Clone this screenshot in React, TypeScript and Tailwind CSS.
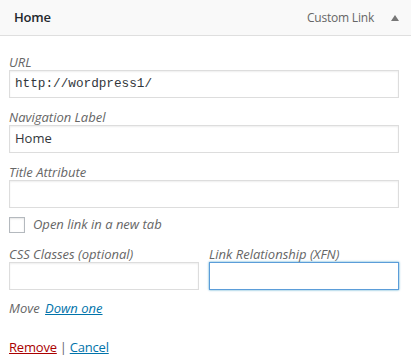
function Field({ label, value, mono }: { label: string; value?: string; mono?: boolean }) {
  return (
    <div className="mt-[11px]">
      <p className="text-[13px] italic leading-[16px] text-[#666]">{label}</p>
      <div
        className={`flex h-[28px] items-center border border-[#ddd] px-[5px] text-[#32373c] shadow-[inset_0_1px_2px_rgba(0,0,0,0.07)] ${
          mono ? "font-['Liberation_Mono',monospace] text-[12.7px]" : 'text-[13px]'
        }`}
      >
        {value}
      </div>
    </div>
  );
}

export default function App() {
  return (
    <div className="h-[364px] w-[411px] bg-white font-['Open_Sans',sans-serif] text-[#444]">
      <div className="flex h-[36px] items-center justify-between border-b border-[#dfdfdf] bg-[#f9f9f9] pl-[14px] pr-[12px]">
        <span className="text-[13px] font-semibold tracking-[-0.2px] text-[#23282d]">Home</span>
        <div className="flex items-center gap-[17px]">
          <span className="text-[12px] tracking-[-0.2px] text-[#666]">Custom Link</span>
          <svg width="8" height="6" viewBox="0 0 8 6">
            <path d="M0 6 L4 0 L8 6 Z" fill="#777" />
          </svg>
        </div>
      </div>

      <div className="pl-[9px] pr-[12px] pt-[7px]">
        <Field label="URL" value="http://wordpress1/" mono />
        <Field label="Navigation Label" value="Home" />
        <Field label="Title Attribute" />

        <label className="mt-[9px] flex h-[16px] items-center gap-[8px]">
          <span className="h-[16px] w-[16px] border border-[#b4b9be] shadow-[inset_0_1px_2px_rgba(0,0,0,0.1)]" />
          <span className="text-[13px] italic text-[#666]">Open link in a new tab</span>
        </label>

        <div className="mt-[13px] grid grid-cols-2 gap-[10px]">
          <div>
            <p className="text-[13px] italic leading-[16px] text-[#666]">CSS Classes (optional)</p>
            <div className="h-[28px] border border-[#ddd] shadow-[inset_0_1px_2px_rgba(0,0,0,0.07)]" />
          </div>
          <div>
            <p className="text-[13px] italic leading-[16px] text-[#666]">Link Relationship (XFN)</p>
            <div className="h-[28px] border border-[#5b9dd9] shadow-[0_0_2px_rgba(30,140,190,0.8)]" />
          </div>
        </div>

        <p className="mt-[10px] text-[13px] italic leading-[16px] text-[#666]">
          Move{' '}
          <a className="ml-[2px] text-[#0073aa] underline">Down one</a>
        </p>

        <p className="mt-[23px] text-[13px] leading-[16px] tracking-[-0.2px]">
          <a className="text-[#a00] underline">Remove</a>
          <span className="mx-[3px] text-[#666]">|</span>
          <a className="text-[#0073aa] underline">Cancel</a>
        </p>
      </div>
    </div>
  );
}
